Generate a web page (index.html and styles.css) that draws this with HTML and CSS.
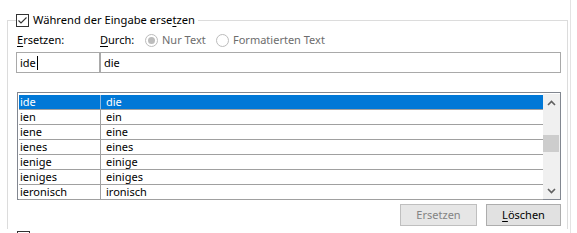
FILE: index.html
```html
<!DOCTYPE html>
<html lang="de">
<head>
<meta charset="utf-8">
<link rel="stylesheet" href="styles.css">
</head>
<body>
<div class="page">
  <fieldset class="group">
    <legend class="group-legend">
      <span class="check">
        <svg width="11" height="11" viewBox="0 0 11 11"><path d="M1.5 5.5 L4 8 L9.5 2.5" fill="none" stroke="#333" stroke-width="1.1"/></svg>
      </span>
      <span class="legend-text">Während der Eingabe erse<u>t</u>zen</span>
    </legend>
    <div class="labels">
      <span class="lbl-from"><u>E</u>rsetzen:</span>
      <span class="lbl-to"><u>D</u>urch:</span>
      <span class="opt opt-first"><span class="radio checked"></span><span class="opt-text">Nur Text</span></span>
      <span class="opt"><span class="radio"></span><span class="opt-text">Formatierten Text</span></span>
    </div>
    <div class="inputs">
      <div class="input input-from">ide<span class="caret"></span></div>
      <div class="input input-to">die</div>
    </div>
    <div class="list">
      <div class="rows">
        <div class="row selected"><span class="c1">ide</span><span class="c2">die</span></div>
        <div class="row"><span class="c1">ien</span><span class="c2">ein</span></div>
        <div class="row"><span class="c1">iene</span><span class="c2">eine</span></div>
        <div class="row"><span class="c1">ienes</span><span class="c2">eines</span></div>
        <div class="row"><span class="c1">ienige</span><span class="c2">einige</span></div>
        <div class="row"><span class="c1">ieniges</span><span class="c2">einiges</span></div>
        <div class="row"><span class="c1">ieronisch</span><span class="c2">ironisch</span></div>
      </div>
      <div class="scrollbar">
        <div class="sb-btn"><svg width="9" height="6" viewBox="0 0 9 6"><path d="M1 5 L4.5 1.5 L8 5" fill="none" stroke="#606060" stroke-width="1.6"/></svg></div>
        <div class="sb-track"><div class="sb-thumb"></div></div>
        <div class="sb-btn"><svg width="9" height="6" viewBox="0 0 9 6"><path d="M1 1 L4.5 4.5 L8 1" fill="none" stroke="#606060" stroke-width="1.6"/></svg></div>
      </div>
    </div>
    <div class="buttons">
      <button class="btn btn-disabled" disabled>Ersetzen</button>
      <button class="btn btn-delete"><u>L</u>öschen</button>
    </div>
  </fieldset>
  <div class="next-check"></div>
</div>
</body>
</html>
```

FILE: styles.css
```css
* { box-sizing: border-box; }
html, body { margin: 0; padding: 0; background: #fff; }
body {
  font-family: "Noto Sans", "Open Sans", sans-serif;
  font-size: 11px;
  color: #000;
}
u { text-decoration: underline; text-underline-offset: 2px; }

.page {
  width: 571px;
  height: 233px;
  padding-top: 12px;
  border-right: 1px solid #e3e3e3;
  overflow: hidden;
}

.group {
  margin: 0 2px 0 7px;
  min-width: 0;
  border: 1px solid #dcdcdc;
  border-bottom: none;
  padding: 0 0 3px 8px;
}

.group-legend {
  display: flex;
  align-items: center;
  height: 16px;
  line-height: 16px;
  padding: 0 3px 0 0;
}

.check {
  width: 13px;
  height: 13px;
  border: 1px solid #333;
  display: flex;
  align-items: center;
  justify-content: center;
  margin-right: 4px;
  background: #fff;
}
.legend-text { font-size: 11.2px; }

.labels {
  display: flex;
  align-items: center;
  height: 16px;
  line-height: 16px;
  margin-top: 4px;
}
.lbl-from { width: 84px; padding-left: 1px; }
.lbl-to { width: 45px; }
.opt { display: flex; align-items: center; color: #6d6d6d; }
.opt-first { width: 71px; }
.opt-text { margin-left: 4px; }
.radio {
  width: 13px;
  height: 13px;
  border: 1px solid #bcbcbc;
  border-radius: 50%;
  background: #fff;
  display: flex;
  align-items: center;
  justify-content: center;
}
.radio.checked::after {
  content: "";
  width: 7px;
  height: 7px;
  border-radius: 50%;
  background: #bcbcbc;
}

.inputs {
  display: flex;
  margin-top: 4px;
  height: 21px;
}
.input {
  height: 21px;
  border: 1px solid #a9a9a9;
  padding-left: 3px;
  line-height: 19px;
  display: flex;
  align-items: center;
}
.input-from { width: 84px; }
.input-to { width: 461px; }
.caret {
  width: 1px;
  height: 14px;
  background: #000;
  margin-left: 1px;
}

.list {
  display: flex;
  margin: 19px 0 0 1px;
  width: 544px;
  height: 108px;
  border: 1px solid #828790;
  padding: 1px 0 0 1px;
}
.rows { width: 524px; padding-top: 1px; }
.row {
  display: flex;
  height: 15px;
  line-height: 14px;
  border-bottom: 1px solid #a0a0a0;
  white-space: nowrap;
}
.row.selected { background: #0078d7; color: #fff; }
.c1 { width: 82px; padding-left: 1px; border-right: 1px solid #a0a0a0; }
.row.selected .c1 { border-right-color: #8fb7dd; }
.c2 { padding-left: 5px; }

.scrollbar {
  width: 17px;
  background: #f0f0f0;
  display: flex;
  flex-direction: column;
}
.sb-btn {
  height: 17px;
  display: flex;
  align-items: center;
  justify-content: center;
}
.sb-track { flex: 1; }
.sb-thumb {
  margin: 24px 1px 0 0;
  height: 17px;
  background: #cdcdcd;
}

.buttons {
  display: flex;
  justify-content: flex-end;
  gap: 9px;
  margin: 4px 6px 0 0;
}
.btn {
  height: 22px;
  border: 1px solid #adadad;
  background: #e1e1e1;
  font-family: inherit;
  font-size: 11px;
  color: #000;
  padding: 0;
  line-height: 18px;
}
.btn-disabled { width: 77px; color: #838383; border-color: #bfbfbf; background: #e6e6e6; }
.btn-delete { width: 75px; }

.next-check {
  margin: 2px 0 0 17px;
  width: 13px;
  height: 13px;
  border: 1px solid #333;
}
```
